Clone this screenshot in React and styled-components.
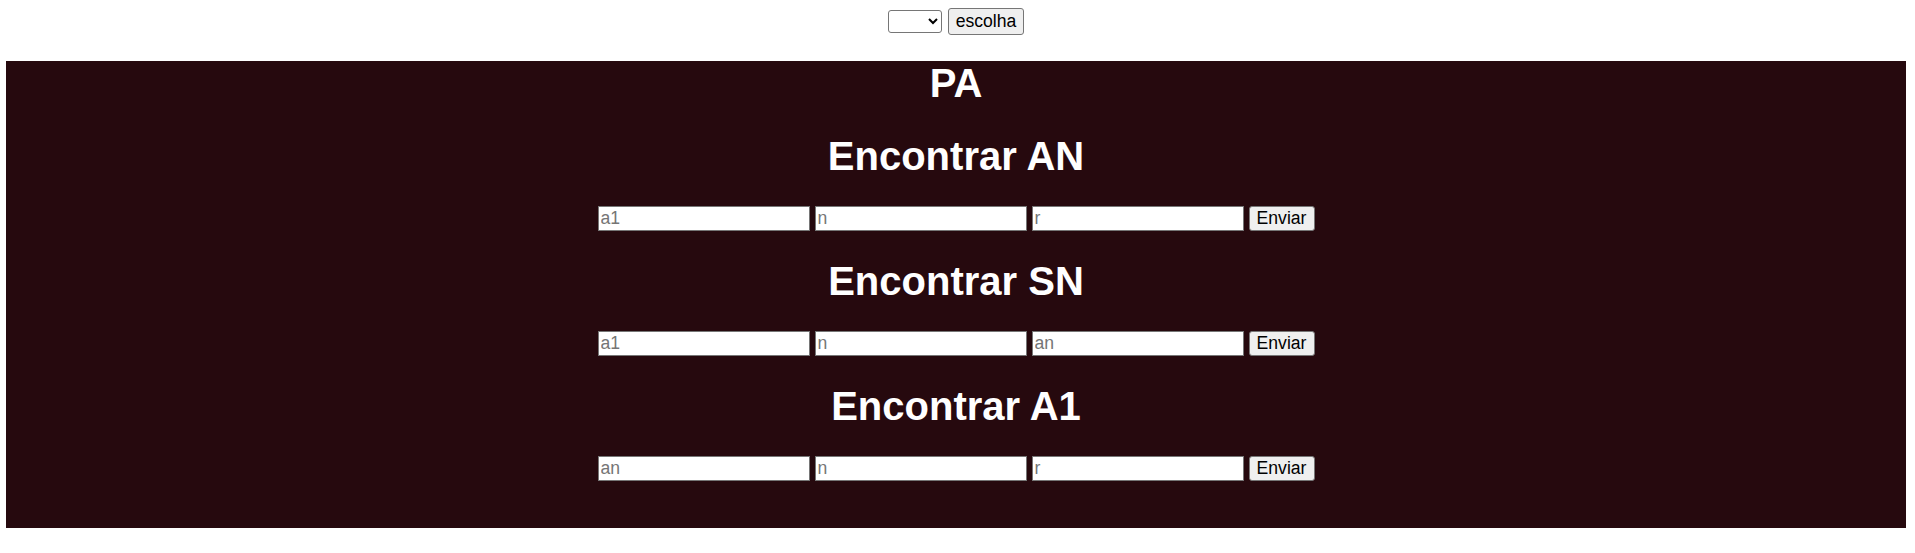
import React from 'react';
import styled, { createGlobalStyle } from 'styled-components';

const GlobalStyle = createGlobalStyle`
  body {
    margin: 0;
    background: #ffffff;
    font-family: 'Liberation Sans', Arial, sans-serif;
  }
`;

const Page = styled.div`
  width: 1900px;
  margin-left: 6px;
`;

const TopBar = styled.div`
  display: flex;
  justify-content: center;
  align-items: center;
  gap: 6px;
  padding-top: 8px;
`;

const Picker = styled.select`
  width: 54px;
  height: 23px;
  font-family: 'Liberation Sans', Arial, sans-serif;
  font-size: 17.6px;
  border: 1px solid #767676;
  border-radius: 3px;
  background: #ffffff;
  color: #000;
  box-sizing: border-box;
`;

const Button = styled.button`
  box-sizing: border-box;
  height: ${(p) => p.$h || 25}px;
  padding: 0 7px;
  font-family: 'Liberation Sans', Arial, sans-serif;
  font-size: 17.6px;
  color: #000;
  background: #efefef;
  border: 1px solid #767676;
  border-radius: 3px;
  cursor: pointer;
`;

const Panel = styled.main`
  margin-top: 26px;
  padding-bottom: 47px;
  background: #26090e;
  color: #ffffff;
  text-align: center;
  display: flow-root;
`;

const Title = styled.h1`
  margin: -1px 0 25px;
  font-size: 40px;
  line-height: 46px;
  font-weight: 700;
`;

const SectionTitle = styled.h2`
  margin: 27px 0;
  font-size: 40px;
  line-height: 46px;
  font-weight: 700;
`;

const Row = styled.form`
  display: flex;
  justify-content: center;
  align-items: center;
  gap: 5px;
  margin: 0;
`;

const Field = styled.input`
  box-sizing: border-box;
  width: 212px;
  height: 25px;
  padding: 1px 2px;
  font-family: 'Liberation Sans', Arial, sans-serif;
  font-size: 17.6px;
  color: #000;
  background: #ffffff;
  border: 1px solid #767676;
  &::placeholder {
    color: #757575;
  }
`;

const sections = [
  { title: 'Encontrar AN', fields: ['a1', 'n', 'r'] },
  { title: 'Encontrar SN', fields: ['a1', 'n', 'an'] },
  { title: 'Encontrar A1', fields: ['an', 'n', 'r'] },
];

function App() {
  return (
    <Page>
      <GlobalStyle />
      <TopBar>
        <Picker defaultValue="">
          <option value=""></option>
        </Picker>
        <Button $h={27} type="button">escolha</Button>
      </TopBar>
      <Panel>
        <Title>PA</Title>
        {sections.map((s) => (
          <React.Fragment key={s.title}>
            <SectionTitle>{s.title}</SectionTitle>
            <Row onSubmit={(e) => e.preventDefault()}>
              {s.fields.map((f, i) => (
                <Field key={i} type="text" placeholder={f} />
              ))}
              <Button type="submit" style={{ width: 66 }}>Enviar</Button>
            </Row>
          </React.Fragment>
        ))}
      </Panel>
    </Page>
  );
}

export default App;
